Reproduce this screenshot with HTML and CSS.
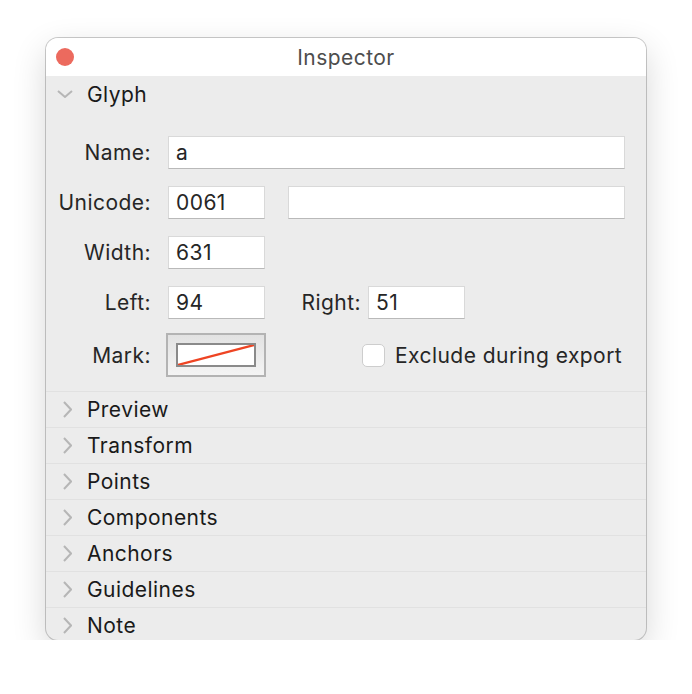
FILE: index.html
```html
<!DOCTYPE html>
<html>

<head>
    <title>Inspector</title>
    <link rel="stylesheet" href="styles.css">
</head>

<body>
    <div class="window">
        <div class="titlebar">
            <span class="close"></span>
            <span class="title">Inspector</span>
        </div>

        <!-- Glyph section (expanded) -->
        <div class="section open">
            <div class="section-head">
                <span class="twisty">
                    <svg class="chev-down" width="16" height="8" viewBox="0 0 16 8">
                        <polyline points="1,1 8,7 15,1" fill="none" stroke="#b6b6b6" stroke-width="2" />
                    </svg>
                </span>
                <span class="section-title">Glyph</span>
            </div>

            <div class="form">
                <div class="row">
                    <label class="lbl">Name:</label>
                    <input class="field grow" type="text" value="a">
                </div>
                <div class="row">
                    <label class="lbl">Unicode:</label>
                    <input class="field small" type="text" value="0061">
                    <input class="field grow extra" type="text" value="">
                </div>
                <div class="row">
                    <label class="lbl">Width:</label>
                    <input class="field small" type="text" value="631">
                </div>
                <div class="row">
                    <label class="lbl">Left:</label>
                    <input class="field small" type="text" value="94">
                    <label class="lbl-right">Right:</label>
                    <input class="field small" type="text" value="51">
                </div>
                <div class="row mark-row">
                    <label class="lbl">Mark:</label>
                    <div class="well">
                        <div class="swatch">
                            <svg width="76" height="20" viewBox="0 0 76 20" preserveAspectRatio="none">
                                <line x1="0" y1="20" x2="76" y2="0" stroke="#ee4423" stroke-width="2.2" />
                            </svg>
                        </div>
                    </div>
                    <label class="check">
                        <span class="box"></span>
                        Exclude during export
                    </label>
                </div>
            </div>
        </div>

        <!-- Collapsed sections -->
        <div class="section"><div class="section-head"><span class="twisty"><svg class="chev-right" width="9" height="17" viewBox="0 0 9 17"><polyline points="1,1 8,8.5 1,16" fill="none" stroke="#b6b6b6" stroke-width="2" /></svg></span><span class="section-title">Preview</span></div></div>
        <div class="section"><div class="section-head"><span class="twisty"><svg class="chev-right" width="9" height="17" viewBox="0 0 9 17"><polyline points="1,1 8,8.5 1,16" fill="none" stroke="#b6b6b6" stroke-width="2" /></svg></span><span class="section-title">Transform</span></div></div>
        <div class="section"><div class="section-head"><span class="twisty"><svg class="chev-right" width="9" height="17" viewBox="0 0 9 17"><polyline points="1,1 8,8.5 1,16" fill="none" stroke="#b6b6b6" stroke-width="2" /></svg></span><span class="section-title">Points</span></div></div>
        <div class="section"><div class="section-head"><span class="twisty"><svg class="chev-right" width="9" height="17" viewBox="0 0 9 17"><polyline points="1,1 8,8.5 1,16" fill="none" stroke="#b6b6b6" stroke-width="2" /></svg></span><span class="section-title">Components</span></div></div>
        <div class="section"><div class="section-head"><span class="twisty"><svg class="chev-right" width="9" height="17" viewBox="0 0 9 17"><polyline points="1,1 8,8.5 1,16" fill="none" stroke="#b6b6b6" stroke-width="2" /></svg></span><span class="section-title">Anchors</span></div></div>
        <div class="section"><div class="section-head"><span class="twisty"><svg class="chev-right" width="9" height="17" viewBox="0 0 9 17"><polyline points="1,1 8,8.5 1,16" fill="none" stroke="#b6b6b6" stroke-width="2" /></svg></span><span class="section-title">Guidelines</span></div></div>
        <div class="section last"><div class="section-head"><span class="twisty"><svg class="chev-right" width="9" height="17" viewBox="0 0 9 17"><polyline points="1,1 8,8.5 1,16" fill="none" stroke="#b6b6b6" stroke-width="2" /></svg></span><span class="section-title">Note</span></div></div>
    </div>
</body>

</html>
```

FILE: styles.css
```css
body {
    margin: 0;
    padding: 38px 0 0 46px;
    background-color: #fff;
    font-family: 'Inter', 'Liberation Sans', sans-serif;
    font-size: 21px;
    letter-spacing: 0.45px;
    color: #222;
}

.window {
    width: 600px;
    height: 602px;
    border-radius: 12px;
    background-color: #ececec;
    overflow: hidden;
    box-shadow: 0 0 0 1px rgba(0, 0, 0, 0.2), 0 12px 34px rgba(0, 0, 0, 0.16);
}

.titlebar {
    height: 38px;
    background-color: #fff;
    display: flex;
    align-items: center;
    justify-content: center;
    position: relative;
}

.close {
    position: absolute;
    left: 10px;
    top: 10px;
    width: 18px;
    height: 18px;
    border-radius: 50%;
    background-color: #ec6a5e;
}

.title {
    color: #4d4d4d;
    font-size: 21px;
}

.section {
    border-top: 1px solid #e1e1e1;
}

.section-head {
    height: 35px;
    display: flex;
    align-items: center;
}

.section.open {
    border-top: none;
    padding-bottom: 14px;
}

.section.open .section-head {
    height: 36px;
}

.twisty {
    width: 41px;
    display: flex;
    align-items: center;
}

.chev-down {
    margin-left: 11px;
}

.chev-right {
    margin-left: 17px;
}

.section-title {
    color: #1a1a1a;
}

.form {
    padding: 24px 21px 0 0;
    display: flex;
    flex-direction: column;
    gap: 17px;
}

.row {
    display: flex;
    align-items: center;
}

.mark-row {
    margin-top: -3px;
}

.lbl {
    width: 105px;
    text-align: right;
    margin-right: 17px;
    color: #262626;
}

.lbl-right {
    width: 96px;
    text-align: right;
    margin-right: 7px;
    color: #262626;
}

.field {
    box-sizing: border-box;
    height: 33px;
    padding: 0 7px;
    border: 1px solid #d9d9d9;
    border-bottom-color: #b9b9b9;
    background-color: #fff;
    font-family: inherit;
    font-size: 21px;
    letter-spacing: 0.45px;
    color: #262626;
    outline: none;
}

.small {
    width: 97px;
}

.grow {
    flex: 1;
    min-width: 0;
}

.extra {
    margin-left: 23px;
}

.well {
    box-sizing: border-box;
    width: 100px;
    height: 44px;
    margin-left: -2px;
    padding: 8px;
    border: 2px solid #b3b3b3;
    background: linear-gradient(#e2e2e2, #f4f4f4);
}

.swatch {
    box-sizing: border-box;
    width: 80px;
    height: 24px;
    border: 2px solid #8a8a8a;
    background-color: #fff;
    display: flex;
}

.check {
    display: flex;
    align-items: center;
    margin-left: 96px;
    color: #262626;
}

.box {
    box-sizing: border-box;
    width: 23px;
    height: 23px;
    margin-right: 10px;
    border: 1px solid #cdcdcd;
    border-radius: 5px;
    background-color: #fff;
}
```
